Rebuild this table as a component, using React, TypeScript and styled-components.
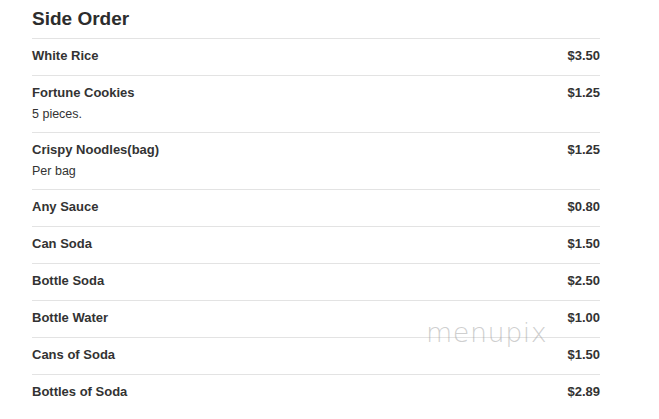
import React from "react";
import styled, { createGlobalStyle } from "styled-components";

const Global = createGlobalStyle`
  html, body { margin: 0; padding: 0; background: #fff; }
  body { font-family: "Liberation Sans", Arial, sans-serif; color: #333; }
`;

const Page = styled.div`
  position: relative;
  width: 659px;
  height: 419px;
  overflow: hidden;
  box-sizing: border-box;
  padding: 0 59px 0 32px;
`;

const Title = styled.h2`
  margin: 0;
  height: 38px;
  line-height: 38px;
  font-size: 19px;
  font-weight: bold;
  color: #2d2d2d;
`;

const List = styled.div`
  display: flex;
  flex-direction: column;
`;

const Row = styled.div<{ $tall?: boolean }>`
  display: flex;
  justify-content: space-between;
  align-items: flex-start;
  box-sizing: border-box;
  min-height: 37px;
  padding: 8px 0 ${(p) => (p.$tall ? "9px" : "9px")};
  border-top: 1px solid #e3e3e3;
`;

const Info = styled.div`
  display: flex;
  flex-direction: column;
`;

const Name = styled.div`
  font-size: 13px;
  font-weight: bold;
  line-height: 18px;
  color: #333;
`;

const Desc = styled.div`
  margin-top: 3px;
  font-size: 12.5px;
  line-height: 18px;
  color: #333;
`;

const Price = styled.div`
  font-size: 13px;
  font-weight: bold;
  line-height: 18px;
  color: #333;
`;

const Watermark = styled.div`
  position: absolute;
  left: 426px;
  top: 317px;
  font-family: "DejaVu Sans", sans-serif;
  font-weight: 200;
  font-size: 27px;
  letter-spacing: 0.5px;
  color: rgba(160, 160, 160, 0.5);
  pointer-events: none;
`;

const items: { name: string; desc?: string; price: string }[] = [
  { name: "White Rice", price: "$3.50" },
  { name: "Fortune Cookies", desc: "5 pieces.", price: "$1.25" },
  { name: "Crispy Noodles(bag)", desc: "Per bag", price: "$1.25" },
  { name: "Any Sauce", price: "$0.80" },
  { name: "Can Soda", price: "$1.50" },
  { name: "Bottle Soda", price: "$2.50" },
  { name: "Bottle Water", price: "$1.00" },
  { name: "Cans of Soda", price: "$1.50" },
  { name: "Bottles of Soda", price: "$2.89" },
];

export default function App() {
  return (
    <>
      <Global />
      <Page>
        <Title>Side Order</Title>
        <List>
          {items.map((it) => (
            <Row key={it.name} $tall={!!it.desc}>
              <Info>
                <Name>{it.name}</Name>
                {it.desc && <Desc>{it.desc}</Desc>}
              </Info>
              <Price>{it.price}</Price>
            </Row>
          ))}
        </List>
        <Watermark>menupix</Watermark>
      </Page>
    </>
  );
}
